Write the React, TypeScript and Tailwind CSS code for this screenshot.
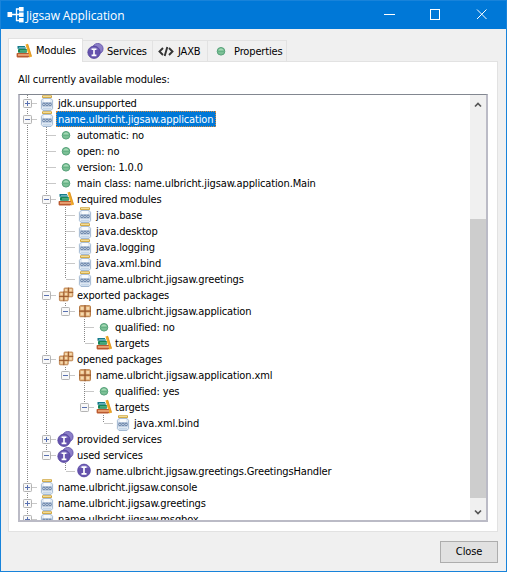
import type { ReactNode } from "react";

type IconName = "jar" | "dot" | "books" | "packages" | "package" | "services" | "service";

function JarIcon() {
  return (
    <svg width="16" height="16" viewBox="0 0 16 16">
      <path d="M4 3.400h8l1.600 2v8.200l-1.600 1.900H4l-1.600-1.900V5.400z" fill="#e3ebf4" stroke="#a3b9d2" />
      <rect x="5" y="4" width="6" height="3" fill="#f8fafc" />
      <rect x="4" y="12.800" width="8" height="1.800" fill="#c6d7e9" />
      <rect x="3" y="0.200" width="10" height="2.800" rx="0.800" fill="#d0a640" />
      <rect x="4" y="1.100" width="8" height="1" fill="#f5e3a0" />
      <rect x="2.400" y="7" width="11.200" height="4.800" rx="2" fill="#b4c5da" />
      <g fill="#dbe6f1" stroke="#5d789f" strokeWidth="0.900">
        <circle cx="4.900" cy="9.400" r="1.200" />
        <circle cx="8" cy="9.400" r="1.200" />
        <circle cx="11.100" cy="9.400" r="1.200" />
      </g>
    </svg>
  );
}

function DotIcon() {
  return (
    <svg width="16" height="16" viewBox="0 0 16 16">
      <circle cx="8" cy="8.300" r="3.800" fill="#7cc096" stroke="#55a078" />
      <path d="M5.400 7.200a2.800 2.800 0 0 1 5.200 0z" fill="#a6d9b6" />
      <path d="M5 8.500h6" stroke="#5fae80" strokeWidth="0.800" />
    </svg>
  );
}

function BooksIcon() {
  return (
    <svg width="16" height="16" viewBox="0 0 16 16">
      <path d="M9.500 1.500L11.800.800l4 12.700-2.600 1z" fill="#f2ab2a" />
      <path d="M11.700 1.200l3.900 12.400" stroke="#d58a1a" strokeWidth="0.700" />
      <path d="M1.500 3h7.300l1.200 2.800H1.500z" fill="#157b8c" />
      <rect x="3" y="4" width="6.300" height="0.900" fill="#6fb9bd" />
      <rect x="2" y="6" width="9" height="3.700" rx="0.800" fill="#168657" />
      <rect x="4" y="7.500" width="7" height="0.900" fill="#7fd0a3" />
      <rect x="0.600" y="9.900" width="12.400" height="4.500" rx="0.800" fill="#bb5a30" />
      <rect x="2" y="11.100" width="11" height="1.700" fill="#eda879" />
    </svg>
  );
}

function PackageGlyph() {
  return (
    <g>
      <rect x="0.500" y="0.500" width="11" height="11" rx="1" fill="#e0ae76" stroke="#b67a45" />
      <g fill="#f5dab0">
        <rect x="1.800" y="1.800" width="2.800" height="2.800" />
        <rect x="7.400" y="1.800" width="2.800" height="2.800" />
        <rect x="1.800" y="7.400" width="2.800" height="2.800" />
        <rect x="7.400" y="7.400" width="2.800" height="2.800" />
      </g>
      <path d="M6 0v12M0 6h12" stroke="#97552a" strokeWidth="1.200" />
    </g>
  );
}

function PackageIcon() {
  return (
    <svg width="16" height="16" viewBox="0 0 16 16">
      <g transform="translate(2 2.200)">
        <PackageGlyph />
      </g>
    </svg>
  );
}

function PackagesIcon() {
  return (
    <svg width="16" height="16" viewBox="0 0 16 16">
      <g transform="translate(5.600 .6) scale(.8)">
        <PackageGlyph />
      </g>
      <g transform="translate(1 4.600) scale(.8)">
        <PackageGlyph />
      </g>
    </svg>
  );
}

function ServiceIcon() {
  return (
    <svg width="16" height="16" viewBox="0 0 16 16" className="relative -left-px">
      <circle cx="8" cy="7.500" r="6.400" fill="#6553ad" stroke="#5544a0" strokeWidth="0.700" />
      <path d="M3 5a5.600 5.600 0 0 1 10 0z" fill="#8577c4" />
      <path d="M5.500 4.200h5M5.500 10.800h5M8 4.200v6.600" stroke="#fff" strokeWidth="1.700" />
    </svg>
  );
}

function ServicesIcon() {
  return (
    <svg width="18" height="16" viewBox="0 0 18 16" className="relative -left-px shrink-0">
      <circle cx="10.800" cy="5.700" r="5.300" fill="#8c7fc8" stroke="#5c4ba6" strokeWidth="0.800" />
      <circle cx="7" cy="9.300" r="6.200" fill="#6553ad" stroke="#50409a" strokeWidth="0.700" />
      <path d="M2.400 6.800a5.400 5.400 0 0 1 9.200 0z" fill="#8577c4" />
      <path d="M4.600 6.200h4.800M4.600 12.400h4.800M7 6.200v6.200" stroke="#fff" strokeWidth="1.600" />
    </svg>
  );
}

const icons: Record<IconName, () => ReactNode> = {
  jar: JarIcon,
  dot: DotIcon,
  books: BooksIcon,
  packages: PackagesIcon,
  package: PackageIcon,
  services: ServicesIcon,
  service: ServiceIcon,
};

interface Node {
  label: string;
  icon: IconName;
  open?: boolean;
  selected?: boolean;
  more?: boolean;
  children?: Node[];
}

const tree: Node[] = [
  { label: "jdk.unsupported", icon: "jar", open: false },
  {
    label: "name.ulbricht.jigsaw.application",
    icon: "jar",
    open: true,
    selected: true,
    children: [
      { label: "automatic: no", icon: "dot" },
      { label: "open: no", icon: "dot" },
      { label: "version: 1.0.0", icon: "dot" },
      { label: "main class: name.ulbricht.jigsaw.application.Main", icon: "dot" },
      {
        label: "required modules",
        icon: "books",
        open: true,
        children: [
          { label: "java.base", icon: "jar" },
          { label: "java.desktop", icon: "jar" },
          { label: "java.logging", icon: "jar" },
          { label: "java.xml.bind", icon: "jar" },
          { label: "name.ulbricht.jigsaw.greetings", icon: "jar" },
        ],
      },
      {
        label: "exported packages",
        icon: "packages",
        open: true,
        children: [
          {
            label: "name.ulbricht.jigsaw.application",
            icon: "package",
            open: true,
            children: [
              { label: "qualified: no", icon: "dot" },
              { label: "targets", icon: "books" },
            ],
          },
        ],
      },
      {
        label: "opened packages",
        icon: "packages",
        open: true,
        children: [
          {
            label: "name.ulbricht.jigsaw.application.xml",
            icon: "package",
            open: true,
            children: [
              { label: "qualified: yes", icon: "dot" },
              {
                label: "targets",
                icon: "books",
                open: true,
                children: [{ label: "java.xml.bind", icon: "jar" }],
              },
            ],
          },
        ],
      },
      { label: "provided services", icon: "services", open: false },
      {
        label: "used services",
        icon: "services",
        open: true,
        children: [{ label: "name.ulbricht.jigsaw.greetings.GreetingsHandler", icon: "service" }],
      },
    ],
  },
  { label: "name.ulbricht.jigsaw.console", icon: "jar", open: false },
  { label: "name.ulbricht.jigsaw.greetings", icon: "jar", open: false },
  { label: "name.ulbricht.jigsaw.msgbox", icon: "jar", open: false, more: true },
];

function Guide({ visible }: { visible: boolean }) {
  return (
    <svg width="19" height="16" className="shrink-0">
      {visible && <path d="M9.500 0v16" stroke="#868686" strokeDasharray="1 1" />}
    </svg>
  );
}

function Connector({ last, open }: { last: boolean; open?: boolean }) {
  return (
    <svg width="19" height="16" className="shrink-0">
      <path d={last ? "M9.500 0v8" : "M9.500 0v16"} stroke="#868686" strokeDasharray="1 1" />
      <path d="M10 8.500h9" stroke="#c8c8c8" />
      {open !== undefined && (
        <g>
          <rect x="5.500" y="4.500" width="8" height="8" rx="0.800" fill="#f8f8f8" stroke="#b4b4b4" />
          <path d={open ? "M7 8.500h5" : "M7 8.500h5M9.500 6v5"} stroke="#5870b0" />
        </g>
      )}
    </svg>
  );
}

function TreeRows({ nodes, guides }: { nodes: Node[]; guides: boolean[] }) {
  return (
    <>
      {nodes.map((node, i) => {
        const last = i === nodes.length - 1 && !node.more;
        const Icon = icons[node.icon];
        return (
          <div key={i}>
            <div className="flex h-4 items-center whitespace-nowrap">
              {guides.map((g, k) => (
                <Guide key={k} visible={g} />
              ))}
              <Connector last={last} open={node.open} />
              <span className="flex w-[19px] shrink-0 pl-[2px]">
                <Icon />
              </span>
              <span
                className={
                  node.selected
                    ? "h-4 border border-dotted border-[#d98a3c] bg-[#0078d7] pl-px pr-[2px] leading-[15px] text-white"
                    : "h-4 pl-[2px] leading-[17px]"
                }
              >
                {node.label}
              </span>
            </div>
            {node.children && <TreeRows nodes={node.children} guides={[...guides, !last]} />}
          </div>
        );
      })}
    </>
  );
}

function TitleBar() {
  return (
    <header className="flex h-[29px] shrink-0 items-center border-t border-[#1883da] bg-[#0078d7] pl-[6px] text-white">
      <svg width="18" height="18" viewBox="0 0 18 18" className="shrink-0">
        <path d="M5 8.500h4M13 3H9.500v11.500H13M9.500 8.500H12" fill="none" stroke="#fff" strokeWidth="1.300" />
        <rect x="0.500" y="6" width="4.600" height="5" fill="#fff" />
        <rect x="12" y="1" width="4.600" height="4.400" fill="#fff" />
        <rect x="12" y="6.500" width="4.600" height="4.400" fill="#fff" />
        <rect x="12" y="12" width="4.600" height="4.400" fill="#fff" />
      </svg>
      <h1 className="ml-px mt-px flex-1 font-['Open_Sans','Noto_Sans',sans-serif] text-[12px] leading-4 tracking-[-0.1px] [font-stretch:normal]">
        Jigsaw Application
      </h1>
      <svg width="140" height="28" fill="none" stroke="#fff" className="shrink-0">
        <path d="M18 13.500h11" />
        <rect x="64.500" y="8.500" width="9" height="10" />
        <path d="M111 8.500l9.500 9.500M120.500 8.500l-9.500 9.500" />
      </svg>
    </header>
  );
}

export default function App() {
  return (
    <div className="flex h-[572px] w-[507px] flex-col overflow-hidden border-x border-b border-[#1883da] bg-[#f0f0f0] font-['DejaVu_Sans_Condensed','DejaVu_Sans',sans-serif] text-[11px] tracking-[-0.14px] text-black [font-stretch:condensed]">
      <TitleBar />
      <nav className="z-10 ml-[7px] mt-[9px] flex h-[23px] shrink-0 items-end whitespace-nowrap">
        <div className="-mb-px flex h-[24px] w-[75px] items-center border border-b-0 border-[#e2e2e2] bg-white pl-[7px]">
          <BooksIcon />
          <span className="ml-[4px] leading-4 tracking-[-0.2px]">Modules</span>
        </div>
        <div className="flex h-[21px] w-[70px] items-center border-r border-t border-[#e2e2e2] pl-[5px]">
          <ServicesIcon />
          <span className="ml-px mt-px leading-4 tracking-[-0.25px]">Services</span>
        </div>
        <div className="flex h-[21px] w-[55px] items-center border-r border-t border-[#e2e2e2] pl-[5px]">
          <svg width="16" height="16" viewBox="0 0 16 16" fill="none" stroke="#333" strokeWidth="1.900">
            <path d="M5 5L1.500 8.500 5 12M11 5l3.500 3.500L11 12M9.300 4L6.700 13" />
          </svg>
          <span className="ml-[4px] mt-px leading-4">JAXB</span>
        </div>
        <div className="flex h-[21px] w-[79px] items-center border-r border-t border-[#e2e2e2] pl-[5px]">
          <DotIcon />
          <span className="ml-[5px] mt-px leading-4">Properties</span>
        </div>
      </nav>
      <main className="ml-[7px] flex h-[471px] w-[490px] shrink-0 flex-col border border-[#e2e2e2] bg-white pl-[9px]">
        <p className="mt-[10px] h-4 leading-4">All currently available modules:</p>
        <section className="mt-[6px] flex h-[428px] w-[470px] overflow-hidden border-2 border-t border-[#bbbbc6] border-t-[#828790]">
          <div className="-ml-[2px] min-w-0 flex-1 overflow-hidden">
            <TreeRows nodes={tree} guides={[]} />
          </div>
          <div className="flex w-4 flex-col bg-[#f0f0f0]">
            <svg width="16" height="124" fill="none" stroke="#555" strokeWidth="1.700">
              <path d="M5 11.500L8 8.500l3 3" />
            </svg>
            <div className="h-[279px] shrink-0 bg-[#cdcdcd]" />
            <svg width="16" height="22" fill="none" stroke="#555" strokeWidth="1.700">
              <path d="M5 12.500l3 3 3-3" />
            </svg>
          </div>
        </section>
      </main>
      <button className="ml-[439px] mt-[9px] h-[22px] w-[58px] shrink-0 border border-[#adadad] bg-[#e1e1e1] leading-4 tracking-[-0.14px]">
        Close
      </button>
    </div>
  );
}
